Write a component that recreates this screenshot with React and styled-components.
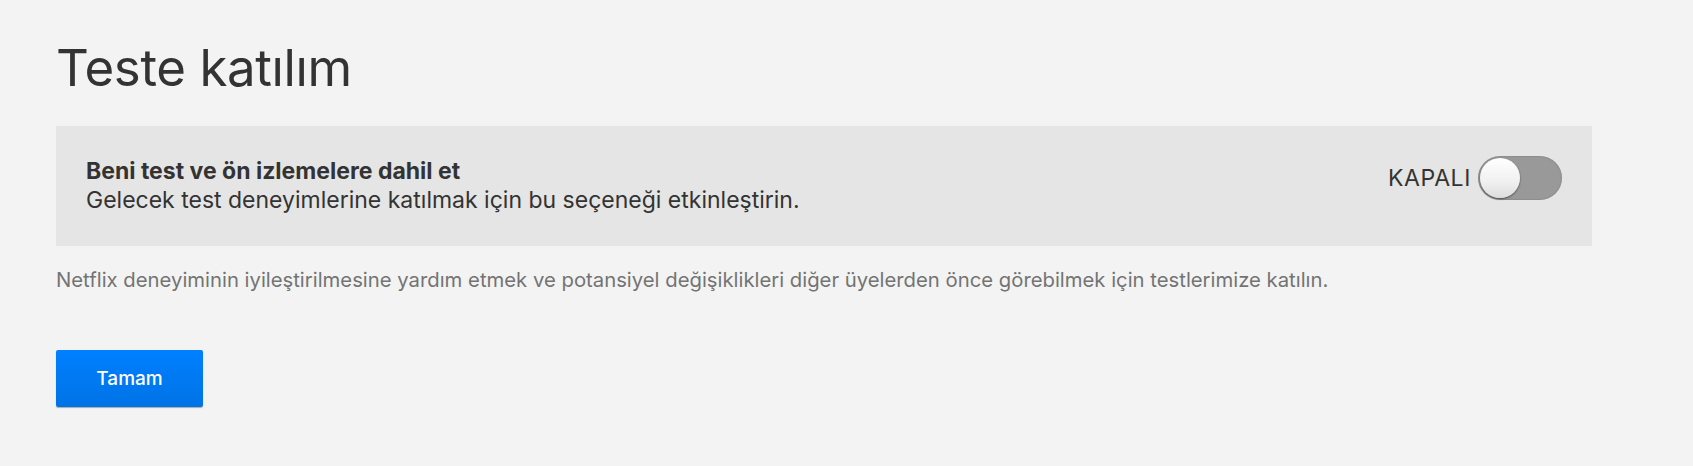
import React, { useState } from 'react'
import styled, { createGlobalStyle } from 'styled-components'

//-----------------------------------------------------------------------------
// Global
//-----------------------------------------------------------------------------
const GlobalStyle = createGlobalStyle`
  html, body {
    margin: 0;
    padding: 0;
    background: #f3f3f3;
  }
  body {
    font-family: Inter, "Noto Sans", Arial, sans-serif;
    color: #333;
  }
`

//-----------------------------------------------------------------------------
// Component
//-----------------------------------------------------------------------------
const App = () => {
  const [enabled, setEnabled] = useState(false)

  return (
    <Page>
      <GlobalStyle />
      <Title>Teste katılım</Title>
      <OptionPanel>
        <OptionText>
          <OptionTitle>Beni test ve ön izlemelere dahil et</OptionTitle>
          <OptionDescription>
            Gelecek test deneyimlerine katılmak için bu seçeneği etkinleştirin.
          </OptionDescription>
        </OptionText>
        <ToggleWrap>
          <ToggleLabel>{enabled ? 'AÇIK' : 'KAPALI'}</ToggleLabel>
          <Track on={enabled ? 1 : 0} onClick={() => setEnabled(!enabled)}>
            <Knob on={enabled ? 1 : 0} />
          </Track>
        </ToggleWrap>
      </OptionPanel>
      <Note>
        Netflix deneyiminin iyileştirilmesine yardım etmek ve potansiyel değişiklikleri diğer üyelerden önce görebilmek için testlerimize katılın.
      </Note>
      <DoneButton>Tamam</DoneButton>
    </Page>
  )
}

//-----------------------------------------------------------------------------
// Styled Components
//-----------------------------------------------------------------------------
const Page = styled.div`
  padding: 38px 56px 40px 56px;
  width: 1536px;
`

const Title = styled.h1`
  margin: 0;
  font-size: 51px;
  font-weight: 400;
  line-height: 60px;
  letter-spacing: -0.4px;
  color: #333;
`

const OptionPanel = styled.div`
  margin: 28px 0 0 0;
  height: 120px;
  box-sizing: border-box;
  padding: 0 30px 0 30px;
  background: #e5e5e5;
  display: flex;
  flex-direction: row;
  justify-content: space-between;
  align-items: center;
`

const OptionText = styled.div`
  display: flex;
  flex-direction: column;
`

const OptionTitle = styled.div`
  font-size: 23px;
  font-weight: 700;
  line-height: 29px;
  color: #333;
`

const OptionDescription = styled.div`
  font-size: 23px;
  line-height: 29px;
  color: #333;
`

const ToggleWrap = styled.div`
  display: flex;
  flex-direction: row;
  align-items: center;
  gap: 7px;
  margin: 0 0 16px 0;
`

const ToggleLabel = styled.span`
  font-size: 23px;
  letter-spacing: 0.6px;
  color: #333;
`

const Track = styled.div`
  position: relative;
  width: 84px;
  height: 44px;
  border-radius: 22px;
  background: ${p => (p.on ? '#0080ff' : '#999')};
  box-shadow: inset 0 0 2px rgba(0, 0, 0, 0.25);
  cursor: pointer;
`

const Knob = styled.div`
  position: absolute;
  top: 2px;
  left: ${p => (p.on ? '42px' : '2px')};
  width: 40px;
  height: 40px;
  border-radius: 50%;
  background: linear-gradient(to bottom, #ffffff 0%, #f0f0f0 60%, #dcdcdc 100%);
  box-shadow: 0 1px 2px rgba(0, 0, 0, 0.5);
`

const Note = styled.p`
  margin: 20px 0 0 0;
  font-size: 20.3px;
  line-height: 28px;
  color: #737373;
`

const DoneButton = styled.button`
  margin: 56px 0 0 0;
  width: 147px;
  height: 57px;
  border: none;
  border-radius: 2px;
  background: linear-gradient(to bottom, #0080ff, #0073e6);
  box-shadow: 0 1px 1px rgba(0, 0, 0, 0.3);
  color: #fff;
  font-family: Inter, "Noto Sans", Arial, sans-serif;
  font-size: 19px;
  font-weight: 500;
  cursor: pointer;
`

export default App
